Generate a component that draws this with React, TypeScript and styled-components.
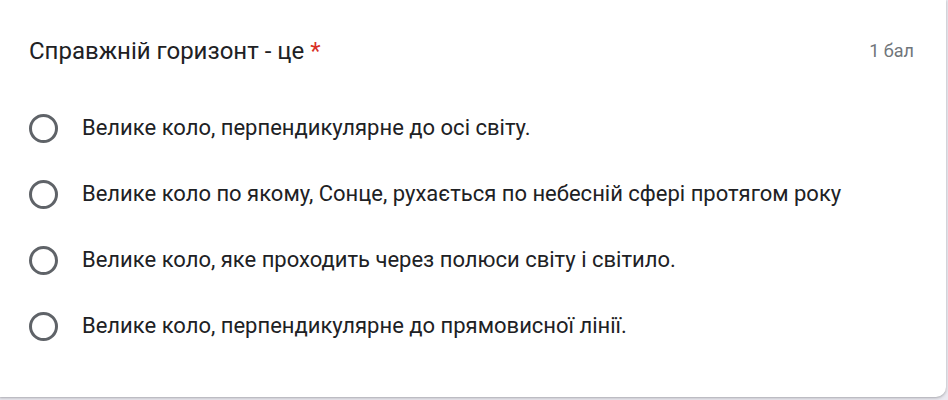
import React from 'react';
import styled, { createGlobalStyle } from 'styled-components';

const GlobalStyle = createGlobalStyle`
  html, body {
    margin: 0;
    padding: 0;
    background: #ebe9f0;
    font-family: Roboto, "Noto Sans", Arial, sans-serif;
  }
`;

const options = [
  'Велике коло, перпендикулярне до осі світу.',
  'Велике коло по якому, Сонце, рухається по небесній сфері протягом року',
  'Велике коло, яке проходить через полюси світу і світило.',
  'Велике коло, перпендикулярне до прямовисної лінії.',
];

export default function App() {
  return (
    <>
      <GlobalStyle />
      <Page>
        <Card>
          <Header>
            <Title>
              Справжній горизонт - це <Required>*</Required>
            </Title>
            <Points>1 бал</Points>
          </Header>
          <OptionList>
            {options.map((text) => (
              <Option key={text}>
                <Radio />
                <OptionText>{text}</OptionText>
              </Option>
            ))}
          </OptionList>
        </Card>
      </Page>
    </>
  );
}

const Page = styled.div`
  width: 948px;
  height: 400px;
  overflow: hidden;
`;

const Card = styled.div`
  box-sizing: border-box;
  width: 946px;
  height: 397px;
  background: #ffffff;
  border-bottom-right-radius: 10px;
  box-shadow: 0 1px 2px rgba(60, 64, 67, 0.25), 0 1px 3px 1px rgba(60, 64, 67, 0.1);
  padding: 36px 32px 0 29px;
`;

const Header = styled.div`
  display: flex;
  justify-content: space-between;
  align-items: center;
`;

const Title = styled.div`
  font-size: 24px;
  line-height: 30px;
  color: #202124;
`;

const Required = styled.span`
  color: #d93025;
`;

const Points = styled.div`
  font-size: 18px;
  line-height: 30px;
  color: #70757a;
`;

const OptionList = styled.div`
  display: flex;
  flex-direction: column;
  gap: 38px;
  margin-top: 48px;
`;

const Option = styled.div`
  display: flex;
  align-items: center;
  gap: 24px;
  height: 28px;
`;

const Radio = styled.span`
  box-sizing: border-box;
  flex-shrink: 0;
  width: 29px;
  height: 29px;
  border: 3px solid #5f6368;
  border-radius: 50%;
`;

const OptionText = styled.span`
  font-size: 22px;
  line-height: 28px;
  color: #202124;
`;
